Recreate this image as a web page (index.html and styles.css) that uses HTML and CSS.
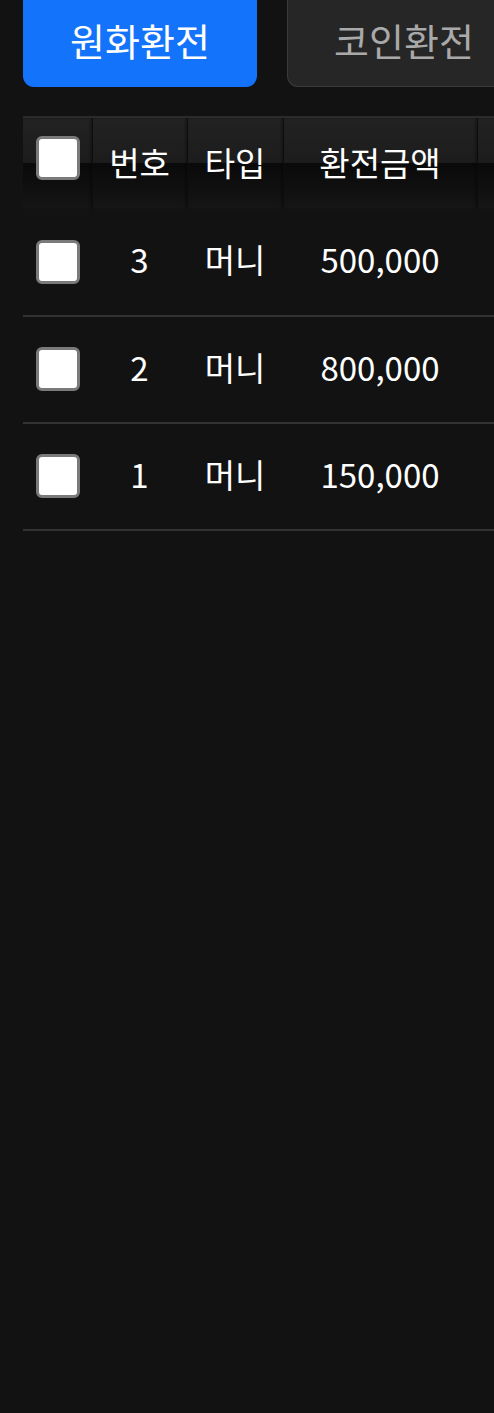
FILE: index.html
```html
<!DOCTYPE html>
<html lang="ko">
<head>
  <meta charset="UTF-8">
  <meta name="viewport" content="width=device-width, initial-scale=1.0">
  <title>환전 내역</title>
  <link rel="stylesheet" href="styles.css">
</head>
<body>
  <div class="page">
    <div class="tabs">
      <button class="tab active">원화환전</button>
      <button class="tab">코인환전</button>
    </div>

    <table class="list">
      <thead>
        <tr>
          <th class="col-check"><span class="check"></span></th>
          <th class="col-no">번호</th>
          <th class="col-type">타입</th>
          <th class="col-amount">환전금액</th>
          <th class="col-rest"></th>
        </tr>
      </thead>
      <tbody>
        <tr>
          <td class="col-check"><span class="check"></span></td>
          <td>3</td>
          <td>머니</td>
          <td>500,000</td>
          <td></td>
        </tr>
        <tr>
          <td class="col-check"><span class="check"></span></td>
          <td>2</td>
          <td>머니</td>
          <td>800,000</td>
          <td></td>
        </tr>
        <tr>
          <td class="col-check"><span class="check"></span></td>
          <td>1</td>
          <td>머니</td>
          <td>150,000</td>
          <td></td>
        </tr>
      </tbody>
    </table>
  </div>
</body>
</html>
```

FILE: styles.css
```css
html, body {
  margin: 0;
  background-color: #121212;
  overflow: hidden;
}
body {
  color: #ffffff;
  font-family: "Noto Sans CJK KR", "Noto Sans", sans-serif;
}
.page {
  width: 760px;
  padding: 0 0 0 23px;
}
.tabs {
  display: flex;
  gap: 30px;
}
.tab {
  width: 234px;
  height: 87px;
  padding: 0 0 8px;
  font-family: inherit;
  font-size: 38px;
  border-radius: 0 0 11px 11px;
  border: 1px solid #3a3a3a;
  border-top: none;
  background-color: #262626;
  color: #a9a9a9;
}
.tab.active {
  background-color: #1473fb;
  border-color: #1473fb;
  color: #ffffff;
}
.list {
  margin-top: 29px;
  border-collapse: collapse;
  table-layout: fixed;
  width: 737px;
}
.list th, .list td {
  box-sizing: border-box;
  padding: 0;
  font-size: 33px;
  font-weight: normal;
  text-align: center;
}
.list th {
  height: 92px;
  padding-bottom: 4px;
  border-top: 2px solid #2b2b2b;
  border-right: 1px solid #0c0c0c;
  box-shadow: inset -2px 0 2px rgba(0, 0, 0, 0.25);
  background: linear-gradient(#222222 0%, #1c1c1c 49%, #0a0a0a 50%, #101010 80%, #161616 100%);
}
.list td {
  height: 107px;
  padding-bottom: 6px;
  border-bottom: 2px solid #333333;
}
.col-check { width: 69px; }
.col-no { width: 95px; }
.col-type { width: 96px; }
.col-amount { width: 194px; }
.list th.col-check {
  text-align: left;
  padding: 0 0 18px 13px;
}
.list td.col-check {
  text-align: left;
  padding: 0 0 8px 13px;
}
.check {
  display: inline-block;
  vertical-align: middle;
  width: 38px;
  height: 38px;
  background-color: #ffffff;
  border: 3px solid #7a7a7a;
  border-radius: 6px;
}
```
